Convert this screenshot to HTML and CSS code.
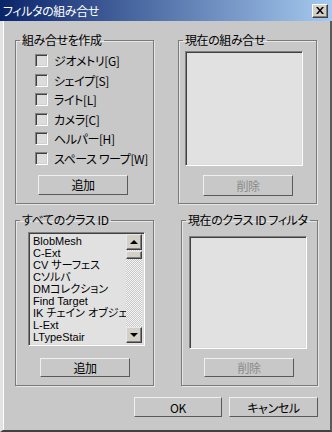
FILE: index.html
```html
<!DOCTYPE html>
<html lang="ja">
<head>
    <meta charset="UTF-8">
    <title>フィルタの組み合せ</title>
    <link rel="stylesheet" href="styles.css">
</head>
<body>
    <div class="window">
        <!-- title bar -->
        <div class="titlebar">
            <span class="title">フィルタの組み合せ</span>
            <button class="close" aria-label="閉じる">
                <svg width="8" height="7" viewBox="0 0 8 7">
                    <path d="M0 0h2l2 2.5L6 0h2L5 3.5 8 7H6L4 4.5 2 7H0l3-3.5z" fill="#000"/>
                </svg>
            </button>
        </div>

        <div class="client">
            <div class="groups">
                <!-- 組み合せを作成 -->
                <fieldset class="group create">
                    <legend>組み合せを作成</legend>
                    <ul class="checks">
                        <li><span class="box"></span>ジオメトリ[G]</li>
                        <li><span class="box"></span>シェイプ[S]</li>
                        <li><span class="box"></span>ライト[L]</li>
                        <li><span class="box"></span>カメラ[C]</li>
                        <li><span class="box"></span>ヘルパー[H]</li>
                        <li><span class="box"></span>スペース ワープ[W]</li>
                    </ul>
                    <button class="btn add-combo">追加</button>
                </fieldset>

                <!-- 現在の組み合せ -->
                <fieldset class="group current">
                    <legend>現在の組み合せ</legend>
                    <div class="listbox current-list"></div>
                    <button class="btn remove" disabled>削除</button>
                </fieldset>

                <!-- すべてのクラス ID -->
                <fieldset class="group classes">
                    <legend>すべてのクラス ID</legend>
                    <div class="listbox class-list">
                        <ul class="items">
                            <li>BlobMesh</li>
                            <li>C-Ext</li>
                            <li>CV サーフェス</li>
                            <li>Cソルバ</li>
                            <li>DMコレクション</li>
                            <li>Find Target</li>
                            <li>IK チェイン オブジェクト</li>
                            <li>L-Ext</li>
                            <li>LTypeStair</li>
                        </ul>
                        <div class="scrollbar">
                            <span class="arrow up"></span>
                            <span class="thumb"></span>
                            <span class="track"></span>
                            <span class="arrow down"></span>
                        </div>
                    </div>
                    <button class="btn add-class">追加</button>
                </fieldset>

                <!-- 現在のクラス ID フィルタ -->
                <fieldset class="group filter">
                    <legend>現在のクラス ID フィルタ</legend>
                    <div class="listbox filter-list"></div>
                    <button class="btn remove-filter" disabled>削除</button>
                </fieldset>
            </div>

            <div class="actions">
                <button class="btn ok">OK</button>
                <button class="btn cancel">キャンセル</button>
            </div>
        </div>
    </div>
</body>
</html>
```

FILE: styles.css
```css
* {
    margin: 0;
    padding: 0;
    box-sizing: border-box;
}

body {
    width: 332px;
    height: 432px;
    overflow: hidden;
    background: #c8c8c8;
    font-family: "Noto Sans CJK JP", "Liberation Sans", sans-serif;
    font-size: 12px;
    font-feature-settings: "palt";
    letter-spacing: -0.4px;
    color: #000;
}

.window {
    width: 332px;
    height: 432px;
    display: flex;
    flex-direction: column;
}

/* title bar */
.titlebar {
    height: 21px;
    display: flex;
    align-items: center;
    justify-content: space-between;
    padding: 0 4px 0 3px;
    background: linear-gradient(to right, #0a246a, #a6caf0);
}

.title {
    color: #fff;
    line-height: 14px;
}

.close {
    width: 16px;
    height: 14px;
    display: flex;
    align-items: center;
    justify-content: center;
    background: #d4d0c8;
    border: 1px solid;
    border-color: #fff #404040 #404040 #fff;
    box-shadow: inset -1px -1px 0 #808080;
}

/* client area */
.client {
    flex: 1;
    padding: 12px 12px 0 12px;
    border-left: 3px solid #e2e2e2;
    border-right: 2px solid #5a5a5a;
    border-bottom: 2px solid #404040;
    box-shadow: inset 1px 0 0 #fff;
}

.groups {
    display: grid;
    grid-template-columns: 139px 139px;
    grid-template-rows: 171px 173px;
    column-gap: 24px;
    row-gap: 9px;
}

.group {
    min-width: 0;
    border: 1px solid #7a7a7a;
    box-shadow: inset 1px 1px 0 #e6e6e6, 1px 1px 0 #e6e6e6;
}

.group legend {
    margin-left: 4px;
    padding: 0 2px;
    line-height: 14px;
}

.filter {
    margin-left: 3px;
    margin-right: -1px;
}

/* checkboxes */
.checks {
    list-style: none;
    margin: 7px 0 0 19px;
    display: flex;
    flex-direction: column;
    gap: 6.6px;
}

.checks li {
    height: 13px;
    display: flex;
    align-items: center;
    gap: 6px;
    line-height: 13px;
}

.box {
    width: 13px;
    height: 13px;
    background: #dcdcdc;
    border: 1px solid;
    border-color: #808080 #fff #fff #808080;
    box-shadow: inset 1px 1px 0 #404040, inset -1px -1px 0 #d4d0c8;
}

/* buttons */
.btn {
    display: block;
    width: 90px;
    height: 20px;
    background: #c8c8c8;
    border: 1px solid;
    border-color: #f0f0f0 #5a5a5a #5a5a5a #f0f0f0;
    font: inherit;
    font-feature-settings: "palt";
    letter-spacing: inherit;
    color: #000;
    line-height: 17px;
}

.btn:disabled {
    color: #8a8a8a;
}

.add-combo {
    margin: 10px 0 0 22px;
}

.remove {
    margin: 9px 0 0 24px;
    height: 21px;
}

.add-class {
    margin: 12px 0 0 24px;
    height: 19px;
}

.remove-filter {
    margin: 9px 0 0 22px;
    height: 19px;
}

/* list boxes */
.listbox {
    background: #e1e1e1;
    border: 1px solid;
    border-color: #808080 #fff #fff #808080;
    box-shadow: inset 1px 1px 0 #404040, inset -1px -1px 0 #dcdcdc;
}

.current-list {
    width: 118px;
    height: 115px;
    margin: 4px 0 0 6px;
}

.filter-list {
    width: 118px;
    height: 113px;
    margin: 9px 0 0 7px;
}

.class-list {
    width: 117px;
    height: 114px;
    margin: 5px 0 0 12px;
    display: flex;
    padding: 1px 2px 2px 2px;
}

.items {
    flex: 1;
    list-style: none;
    overflow: hidden;
    padding: 1px 0 0 2px;
    white-space: nowrap;
    font-family: "Liberation Sans", "Noto Sans CJK JP", sans-serif;
    font-size: 11px;
    letter-spacing: 0;
}

.items li {
    height: 12px;
    line-height: 12px;
}

/* scrollbar */
.scrollbar {
    width: 16px;
    display: flex;
    flex-direction: column;
    background: repeating-conic-gradient(#c8c8c8 0 25%, #f4f4f4 0 50%) 0 0 / 2px 2px;
}

.arrow, .thumb {
    display: flex;
    align-items: center;
    justify-content: center;
    background: #d4d0c8;
    border: 1px solid;
    border-color: #e8e8e8 #404040 #404040 #e8e8e8;
    box-shadow: inset -1px -1px 0 #808080;
}

.arrow {
    height: 16px;
}

.thumb {
    height: 8px;
    margin-top: 1px;
}

.track {
    flex: 1;
}

.arrow::before {
    content: "";
    border-left: 4px solid transparent;
    border-right: 4px solid transparent;
}

.up::before {
    border-bottom: 4px solid #000;
}

.down::before {
    border-top: 4px solid #000;
}

/* dialog buttons */
.actions {
    display: flex;
    justify-content: flex-end;
    gap: 7px;
    margin-top: 11px;
}

.ok {
    width: 88px;
}

.cancel {
    width: 89px;
}
```
